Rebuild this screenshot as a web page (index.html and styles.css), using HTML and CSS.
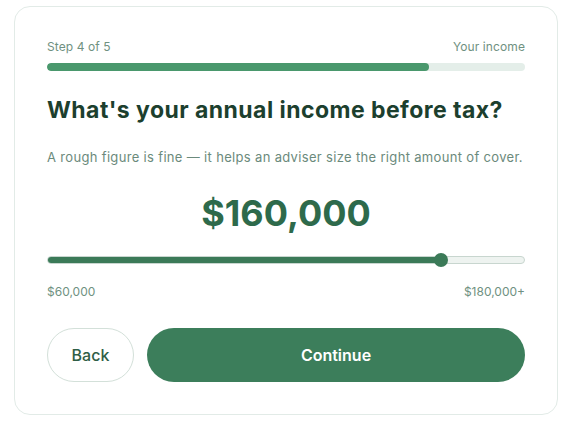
FILE: index.html
```html
<!DOCTYPE html>
<html lang="en">
<head>
    <meta charset="UTF-8">
    <meta name="viewport" content="width=device-width, initial-scale=1.0">
    <title>Your income</title>
    <link rel="stylesheet" href="styles.css">
</head>
<body>
    <div class="card">
        <div class="step-row">
            <span>Step 4 of 5</span>
            <span>Your income</span>
        </div>
        <div class="progress">
            <div class="progress-fill" style="width: 80%"></div>
        </div>

        <h1>What's your annual income before tax?</h1>
        <p class="hint">A rough figure is fine — it helps an adviser size the right amount of cover.</p>

        <div class="amount">$160,000</div>

        <div class="slider">
            <div class="slider-track">
                <div class="slider-fill" style="width: 82.9%"></div>
            </div>
            <div class="slider-thumb" style="left: calc(7px + (100% - 14px) * 0.833)"></div>
        </div>
        <div class="range-labels">
            <span>$60,000</span>
            <span>$180,000+</span>
        </div>

        <div class="actions">
            <button class="btn-back">Back</button>
            <button class="btn-continue">Continue</button>
        </div>
    </div>
</body>
</html>
```

FILE: styles.css
```css
/* Reset */
* {
    margin: 0;
    padding: 0;
    box-sizing: border-box;
}

body {
    font-family: 'Inter', 'Liberation Sans', sans-serif;
    background: #fff;
    padding: 6px 0 0 14px;
}

.card {
    width: 544px;
    border: 1px solid #e2ebe7;
    border-radius: 16px;
    padding: 32px 32px 32px 32px;
    background: #fff;
}

.step-row {
    display: flex;
    justify-content: space-between;
    font-size: 12px;
    line-height: 15px;
    color: #6f9181;
    letter-spacing: 0.1px;
}

.progress {
    margin-top: 9px;
    height: 8px;
    border-radius: 4px;
    background: #e4eee9;
    overflow: hidden;
}

.progress-fill {
    height: 100%;
    border-radius: 4px;
    background: #4a986d;
}

h1 {
    margin-top: 25px;
    font-size: 23px;
    line-height: 28px;
    font-weight: 700;
    letter-spacing: 0.45px;
    color: #1c3f2e;
}

.hint {
    margin-top: 23px;
    font-size: 13px;
    line-height: 20px;
    letter-spacing: 0.33px;
    color: #6b8a7c;
}

.amount {
    margin-top: 24px;
    text-align: center;
    font-size: 36px;
    line-height: 44px;
    font-weight: 700;
    color: #2e6a4b;
}

.slider {
    position: relative;
    margin-top: 17px;
    height: 16px;
    display: flex;
    align-items: center;
}

.slider-track {
    width: 100%;
    height: 8px;
    border: 1px solid #c8d6cf;
    border-radius: 4px;
    background: #eef3f0;
    overflow: hidden;
}

.slider-fill {
    height: 100%;
    background: #3b7a58;
}

.slider-thumb {
    position: absolute;
    top: 1px;
    width: 14px;
    height: 14px;
    margin-left: -7px;
    border-radius: 50%;
    background: #3b7a58;
}

.range-labels {
    margin-top: 16px;
    display: flex;
    justify-content: space-between;
    font-size: 12px;
    line-height: 15px;
    color: #6f9181;
}

.actions {
    margin-top: 29px;
    display: flex;
    gap: 13px;
}

button {
    font-family: inherit;
    height: 54px;
    border-radius: 27px;
    font-size: 16px;
    cursor: pointer;
}

.btn-back {
    width: 87px;
    border: 1px solid #d3e0d9;
    background: #fff;
    color: #2f5e46;
    font-weight: 500;
}

.btn-continue {
    flex: 1;
    border: none;
    background: #3c7e5b;
    color: #fff;
    font-weight: 600;
}
```
